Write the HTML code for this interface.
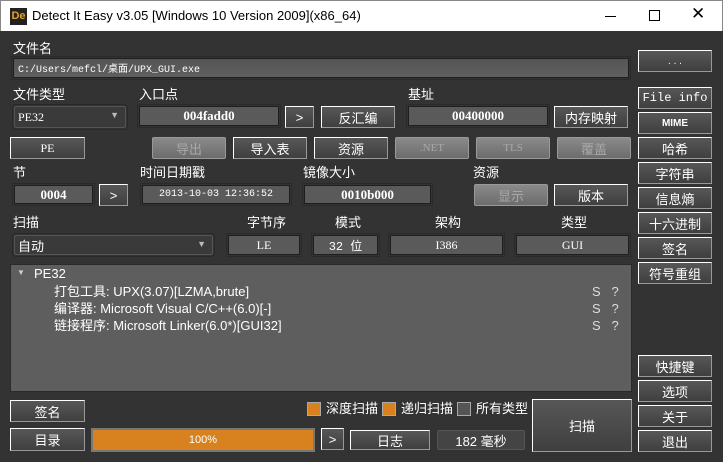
<!DOCTYPE html>
<html><head><meta charset="utf-8"><style>
*{margin:0;padding:0;box-sizing:border-box}
body{width:723px;height:462px;background:#333;position:relative;overflow:hidden;font-family:"Liberation Sans","Noto Sans CJK SC",sans-serif;font-size:13px;color:#fff}
.tb{position:absolute;left:0;top:0;width:723px;height:31px;background:#fff;color:#000;border:1px solid #888;border-bottom:none}
.a{position:absolute}
.l{position:absolute;font-size:13px;color:#fff;line-height:14px}
.b{position:absolute;background:linear-gradient(#575757,#3f3f3f);border:1px solid;border-color:#fff #999 #999 #fff;color:#fff;text-align:center;font-size:13px;display:flex;align-items:center;justify-content:center}
.d{position:absolute;background:linear-gradient(#8a8a8a,#6c6c6c);border:1px solid #999;border-radius:2px;color:#a8a8a8;text-align:center;font-size:13px;display:flex;align-items:center;justify-content:center}
.f{position:absolute;background:#5a5a5a;border:1px solid #1e1e1e;outline:1px solid #2a2a2a;outline-offset:1px;color:#fff;display:flex;align-items:center;justify-content:center;font-family:"Liberation Serif","Noto Serif CJK SC",serif;font-size:12px}
.cb{position:absolute;width:14px;height:14px;border:1px solid #aaa}
</style></head><body>
<div class="tb">
 <div class="a" style="left:9px;top:7px;width:17px;height:17px;background:#222;color:#e8a020;font-size:11px;font-weight:bold;line-height:17px;text-align:center">De</div>
 <div class="a" style="left:31px;top:7px;font-size:13px">Detect It Easy v3.05 [Windows 10 Version 2009](x86_64)</div>
 <div class="a" style="left:604px;top:15px;width:11px;height:1px;background:#000"></div>
 <div class="a" style="left:648px;top:9px;width:11px;height:11px;border:1px solid #000"></div>
 <div class="a" style="left:690px;top:3px;font-size:17px">✕</div>
</div>
<div class="l" style="left:13px;top:42px">文件名</div>
<div class="f" style="left:13px;top:58px;width:616px;height:20px;justify-content:flex-start;padding-left:4px;background:linear-gradient(#555,#5f5f5f);font-family:'Liberation Mono','Noto Sans CJK SC',monospace;font-size:10px">C:/Users/mefcl/桌面/UPX_GUI.exe</div>
<div class="b" style="left:638px;top:50px;width:74px;height:22px;font-size:10px">. . .</div>

<div class="l" style="left:13px;top:88px">文件类型</div>
<div class="f" style="left:14px;top:106px;width:112px;height:22px;justify-content:flex-start;padding-left:3px;background:#3a3a3a;border-color:#555;border-radius:2px">PE32<span style="position:absolute;right:6px;top:3px;font-size:9px;color:#bbb">▼</span></div>
<div class="l" style="left:139px;top:88px">入口点</div>
<div class="f" style="left:139px;top:106px;width:140px;height:20px;font-weight:bold;font-size:13px">004fadd0</div>
<div class="b" style="left:285px;top:106px;width:29px;height:22px">&gt;</div>
<div class="b" style="left:321px;top:106px;width:74px;height:22px">反汇编</div>
<div class="l" style="left:408px;top:88px">基址</div>
<div class="f" style="left:408px;top:106px;width:140px;height:20px;font-weight:bold;font-size:13px">00400000</div>
<div class="b" style="left:554px;top:106px;width:74px;height:22px">内存映射</div>
<div class="b" style="left:638px;top:87px;width:74px;height:22px;font-family:'Liberation Mono',monospace;font-size:12px">File info</div>
<div class="b" style="left:638px;top:112px;width:74px;height:22px;font-size:10px;font-weight:bold">MIME</div>
<div class="b" style="left:638px;top:137px;width:74px;height:22px">哈希</div>

<div class="b" style="left:10px;top:137px;width:75px;height:22px;font-family:'Liberation Serif',serif;font-size:12px">PE</div>
<div class="d" style="left:152px;top:137px;width:74px;height:22px">导出</div>
<div class="b" style="left:233px;top:137px;width:74px;height:22px">导入表</div>
<div class="b" style="left:314px;top:137px;width:74px;height:22px">资源</div>
<div class="d" style="left:395px;top:137px;width:74px;height:22px;font-family:'Liberation Serif',serif;font-size:11px">.NET</div>
<div class="d" style="left:476px;top:137px;width:74px;height:22px;font-family:'Liberation Serif',serif;font-size:11px">TLS</div>
<div class="d" style="left:557px;top:137px;width:74px;height:22px">覆盖</div>

<div class="l" style="left:13px;top:166px">节</div>
<div class="f" style="left:14px;top:185px;width:79px;height:19px;font-weight:bold;font-size:13px">0004</div>
<div class="b" style="left:99px;top:184px;width:29px;height:22px">&gt;</div>
<div class="l" style="left:140px;top:166px">时间日期戳</div>
<div class="f" style="left:142px;top:185px;width:148px;height:19px;font-family:'Liberation Mono',monospace;font-size:10px">2013-10-03 12:36:52</div>
<div class="l" style="left:303px;top:166px">镜像大小</div>
<div class="f" style="left:304px;top:185px;width:127px;height:19px;font-weight:bold;font-size:13px">0010b000</div>
<div class="l" style="left:473px;top:166px">资源</div>
<div class="d" style="left:474px;top:184px;width:74px;height:22px">显示</div>
<div class="b" style="left:554px;top:184px;width:74px;height:22px">版本</div>
<div class="b" style="left:638px;top:162px;width:74px;height:22px">字符串</div>
<div class="b" style="left:638px;top:187px;width:74px;height:22px">信息熵</div>
<div class="b" style="left:638px;top:212px;width:74px;height:22px">十六进制</div>
<div class="b" style="left:638px;top:237px;width:74px;height:22px">签名</div>
<div class="b" style="left:638px;top:262px;width:74px;height:22px">符号重组</div>

<div class="l" style="left:13px;top:216px">扫描</div>
<div class="f" style="left:14px;top:235px;width:199px;height:20px;justify-content:flex-start;padding-left:3px;background:#3a3a3a;border-color:#555;border-radius:2px;font-family:'Liberation Sans','Noto Sans CJK SC',sans-serif;font-size:13px">自动<span style="position:absolute;right:6px;top:3px;font-size:9px;color:#bbb">▼</span></div>
<div class="l" style="left:247px;top:216px">字节序</div>
<div class="f" style="left:228px;top:235px;width:72px;height:20px">LE</div>
<div class="l" style="left:335px;top:216px">模式</div>
<div class="f" style="left:313px;top:235px;width:65px;height:20px;font-family:'Liberation Mono','Noto Sans CJK SC',monospace">32 位</div>
<div class="l" style="left:435px;top:216px">架构</div>
<div class="f" style="left:390px;top:235px;width:113px;height:20px">I386</div>
<div class="l" style="left:561px;top:216px">类型</div>
<div class="f" style="left:516px;top:235px;width:113px;height:20px">GUI</div>

<div class="a" style="left:10px;top:264px;width:622px;height:128px;background:#5e5e5e;border:1px solid #2a2a2a"></div>
<div class="a" style="left:17px;top:268px;font-size:8px;color:#ccc">▼</div>
<div class="l" style="left:34px;top:267px">PE32</div>
<div class="l" style="left:54px;top:285px">打包工具: UPX(3.07)[LZMA,brute]</div>
<div class="l" style="left:54px;top:302px">编译器: Microsoft Visual C/C++(6.0)[-]</div>
<div class="l" style="left:54px;top:319px">链接程序: Microsoft Linker(6.0*)[GUI32]</div>
<div class="l" style="left:592px;top:285px;color:#ddd">S&nbsp;&nbsp;&nbsp;?</div>
<div class="l" style="left:592px;top:302px;color:#ddd">S&nbsp;&nbsp;&nbsp;?</div>
<div class="l" style="left:592px;top:319px;color:#ddd">S&nbsp;&nbsp;&nbsp;?</div>

<div class="b" style="left:638px;top:355px;width:74px;height:22px">快捷键</div>
<div class="b" style="left:638px;top:380px;width:74px;height:22px">选项</div>
<div class="b" style="left:638px;top:405px;width:74px;height:22px">关于</div>
<div class="b" style="left:638px;top:430px;width:74px;height:22px">退出</div>

<div class="b" style="left:10px;top:400px;width:75px;height:22px">签名</div>
<div class="cb" style="left:307px;top:402px;background:#d7821e"></div>
<div class="l" style="left:326px;top:402px">深度扫描</div>
<div class="cb" style="left:382px;top:402px;background:#d7821e"></div>
<div class="l" style="left:401px;top:402px">递归扫描</div>
<div class="cb" style="left:457px;top:402px;background:#555"></div>
<div class="l" style="left:476px;top:402px">所有类型</div>
<div class="b" style="left:532px;top:399px;width:100px;height:53px">扫描</div>

<div class="b" style="left:10px;top:428px;width:75px;height:23px">目录</div>
<div class="a" style="left:91px;top:428px;width:224px;height:24px;background:#d7821e;border:2px solid #777;color:#fff;text-align:center;font-size:11px;line-height:20px">100%</div>
<div class="b" style="left:321px;top:428px;width:23px;height:22px">&gt;</div>
<div class="b" style="left:350px;top:430px;width:80px;height:20px">日志</div>
<div class="d" style="left:437px;top:430px;width:88px;height:20px;background:#444;border-color:#555;color:#fff">182 毫秒</div>
</body></html>
